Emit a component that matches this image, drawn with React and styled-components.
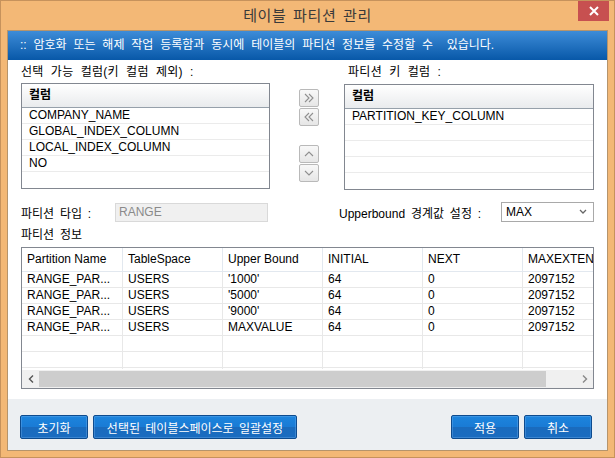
import React from "react";
import styled, { createGlobalStyle } from "styled-components";

const Global = createGlobalStyle`
  html, body { margin: 0; padding: 0; background: #ffffff; }
  body {
    font-family: "Liberation Sans", "Noto Sans CJK KR", sans-serif;
    font-size: 12px;
    color: #000;
  }
  * { box-sizing: border-box; }
`;

const Window = styled.div`
  width: 615px;
  height: 458px;
  border: 1px solid #c6925c;
  background: #f3b876;
  display: flex;
  flex-direction: column;
`;

const TitleBar = styled.div`
  height: 29px;
  display: grid;
  grid-template-columns: 1fr auto 1fr;
  align-items: start;
`;

const Title = styled.div`
  grid-column: 2;
  font-size: 15px;
  line-height: 29px;
  color: #3a3a3a;
  letter-spacing: 0.6px;
  word-spacing: 2px;
`;

const CloseButton = styled.div`
  grid-column: 3;
  justify-self: end;
  width: 31px;
  height: 20px;
  margin-right: 5px;
  background: #c75050;
  display: flex;
  align-items: center;
  justify-content: center;
`;

const Client = styled.div`
  flex: 1;
  margin: 0 6px 6px 6px;
  border: 1px solid #b5946c;
  background: #ffffff;
  display: flex;
  flex-direction: column;
`;

const Banner = styled.div`
  height: 29px;
  background: linear-gradient(#3d8cd8, #0858a8);
  color: #ffffff;
  padding-left: 12px;
  line-height: 29px;
  font-size: 12px;
  word-spacing: 3.5px;
  white-space: pre;
`;

const Body = styled.div`
  flex: 1;
  padding: 5px 13px 0 13px;
  display: flex;
  flex-direction: column;
`;

const TopSection = styled.div`
  display: flex;
`;

const ListColumn = styled.div`
  width: ${(p) => p.$w}px;
  display: flex;
  flex-direction: column;
`;

const Label = styled.div`
  height: 18px;
  line-height: 15px;
  padding-left: ${(p) => p.$indent || 0}px;
  white-space: nowrap;
  word-spacing: 3.5px;
  letter-spacing: 0.3px;
`;

const ListBox = styled.div`
  height: 106px;
  border: 1px solid #828790;
  margin-top: ${(p) => p.$offset || 0}px;
  display: flex;
  flex-direction: column;
  overflow: hidden;
`;

const ListHeader = styled.div`
  height: 24px;
  flex: none;
  background: linear-gradient(#ffffff, #e9ebed);
  border-bottom: 1px solid #96a0aa;
  font-weight: bold;
  padding-left: 7px;
  line-height: 23px;
`;

const ListRow = styled.div`
  height: 16px;
  flex: none;
  border-bottom: 1px solid ${(p) => (p.$last ? "transparent" : "#ebebeb")};
  padding-left: 7px;
  line-height: 15px;
  white-space: nowrap;
`;

const MoveColumn = styled.div`
  width: 74px;
  padding: 24px 0 0 29px;
  display: flex;
  flex-direction: column;
`;

const MoveGroup = styled.div`
  display: flex;
  flex-direction: column;
  gap: 1px;
  margin-top: ${(p) => p.$gap || 0}px;
`;

const MoveButton = styled.div`
  width: 20px;
  height: 18px;
  border: 1px solid #b9b9b9;
  border-radius: 2px;
  background: linear-gradient(#f8f8f8, #e6e6e6);
  display: flex;
  align-items: center;
  justify-content: center;
`;

const SettingsRow = styled.div`
  display: flex;
  align-items: center;
  margin-top: 12px;
  height: 20px;
`;

const FieldLabel = styled.div`
  width: ${(p) => p.$w}px;
  white-space: nowrap;
  word-spacing: 2.5px;
`;

const ReadOnlyInput = styled.div`
  width: 153px;
  height: 19px;
  background: #f0f0f0;
  border: 1px solid #d9d9d9;
  color: #8a8a8a;
  padding-left: 3px;
  line-height: 17px;
`;

const Spacer = styled.div`
  flex: 1;
`;

const Select = styled.div`
  width: 93px;
  height: 20px;
  border: 1px solid #a9a9a9;
  background: #ffffff;
  display: flex;
  align-items: center;
  justify-content: space-between;
  padding: 0 6px 0 4px;
`;

const SectionLabel = styled.div`
  margin-top: 5px;
  height: 20px;
  line-height: 16px;
  word-spacing: 2.5px;
`;

const Grid = styled.div`
  height: 142px;
  border: 1px solid #828790;
  display: flex;
  flex-direction: column;
  overflow: hidden;
`;

const GridViewport = styled.div`
  height: 122px;
  overflow: hidden;
`;

const GridRow = styled.div`
  display: flex;
  height: ${(p) => (p.$head ? 24 : 16)}px;
  border-bottom: 1px solid ${(p) => (p.$head ? "#e2e8ef" : "#e8e8e8")};
`;

const Cell = styled.div`
  flex: none;
  width: ${(p) => p.$w}px;
  padding-left: 5px;
  border-right: 1px solid ${(p) => (p.$head ? "#e2e8ef" : "#e8e8e8")};
  line-height: ${(p) => (p.$head ? 22 : 15)}px;
  white-space: nowrap;
  overflow: hidden;
`;

const ScrollBar = styled.div`
  height: 18px;
  margin-top: 1px;
  background: #f0f0f0;
  display: flex;
  align-items: stretch;
`;

const ScrollArrow = styled.div`
  width: 17px;
  flex: none;
  display: flex;
  align-items: center;
  justify-content: center;
`;

const ScrollThumb = styled.div`
  width: 507px;
  margin: 1px 0;
  background: #cdcdcd;
`;

const Footer = styled.div`
  height: 51px;
  background: #eceff2;
  display: flex;
  align-items: flex-start;
  padding: 16px 15px 0 12px;
  gap: 5px;
`;

const BlueButton = styled.div`
  width: ${(p) => p.$w}px;
  height: 24px;
  border: 1px solid #0d4b8e;
  border-radius: 2px;
  background: linear-gradient(#1c84dd 0%, #1a7bd5 50%, #1a6bbd 50%, #1a6cc0 100%);
  box-shadow: inset 0 0 0 1px rgba(120, 180, 240, 0.35);
  color: #ffffff;
  display: flex;
  align-items: center;
  justify-content: center;
  font-size: 12px;
  word-spacing: 2px;
`;

const Chevron = ({ dir, double }) => {
  const paths = {
    right: double ? ["M4 3 L8 7 L4 11", "M8 3 L12 7 L8 11"] : ["M6 3 L10 7 L6 11"],
    left: double ? ["M8 3 L4 7 L8 11", "M12 3 L8 7 L12 11"] : ["M10 3 L6 7 L10 11"],
    up: ["M3 9 L7 5 L11 9"],
    down: ["M3 5 L7 9 L11 5"],
  };
  const w = double ? 16 : 14;
  return (
    <svg width={w} height="14" viewBox={`0 0 ${w} 14`}>
      {paths[dir].map((d) => (
        <path key={d} d={d} fill="none" stroke="#8f8f8f" strokeWidth="1.1" />
      ))}
    </svg>
  );
};

const columns = [
  { key: "name", label: "Partition Name", w: 101 },
  { key: "ts", label: "TableSpace", w: 100 },
  { key: "ub", label: "Upper Bound", w: 100 },
  { key: "init", label: "INITIAL", w: 100 },
  { key: "next", label: "NEXT", w: 100 },
  { key: "max", label: "MAXEXTENTS", w: 100 },
];

const rows = [
  { name: "RANGE_PAR...", ts: "USERS", ub: "'1000'", init: "64", next: "0", max: "2097152" },
  { name: "RANGE_PAR...", ts: "USERS", ub: "'5000'", init: "64", next: "0", max: "2097152" },
  { name: "RANGE_PAR...", ts: "USERS", ub: "'9000'", init: "64", next: "0", max: "2097152" },
  { name: "RANGE_PAR...", ts: "USERS", ub: "MAXVALUE", init: "64", next: "0", max: "2097152" },
  {},
  {},
  {},
];

const leftItems = ["COMPANY_NAME", "GLOBAL_INDEX_COLUMN", "LOCAL_INDEX_COLUMN", "NO", ""];
const rightItems = ["PARTITION_KEY_COLUMN", "", "", "", ""];

export default function App() {
  return (
    <>
      <Global />
      <Window>
        <TitleBar>
          <Title>테이블 파티션 관리</Title>
          <CloseButton>
            <svg width="10" height="10" viewBox="0 0 10 10">
              <path d="M1 1 L9 9 M9 1 L1 9" stroke="#ffffff" strokeWidth="2" />
            </svg>
          </CloseButton>
        </TitleBar>
        <Client>
          <Banner>:: 암호화 또는 해제 작업 등록함과 동시에 테이블의 파티션 정보를 수정할 수  있습니다.</Banner>
          <Body>
            <TopSection>
              <ListColumn $w={249}>
                <Label>선택 가능 컬럼(키 컬럼 제외) :</Label>
                <ListBox>
                  <ListHeader>컬럼</ListHeader>
                  {leftItems.map((t, i) => (
                    <ListRow key={i} $last={i === leftItems.length - 1}>{t}</ListRow>
                  ))}
                </ListBox>
              </ListColumn>
              <MoveColumn>
                <MoveGroup>
                  <MoveButton><Chevron dir="right" double /></MoveButton>
                  <MoveButton><Chevron dir="left" double /></MoveButton>
                </MoveGroup>
                <MoveGroup $gap={19}>
                  <MoveButton><Chevron dir="up" /></MoveButton>
                  <MoveButton><Chevron dir="down" /></MoveButton>
                </MoveGroup>
              </MoveColumn>
              <ListColumn $w={250}>
                <Label $indent={4}>파티션 키 컬럼 :</Label>
                <ListBox $offset={1}>
                  <ListHeader>컬럼</ListHeader>
                  {rightItems.map((t, i) => (
                    <ListRow key={i} $last={i === rightItems.length - 1}>{t}</ListRow>
                  ))}
                </ListBox>
              </ListColumn>
            </TopSection>
            <SettingsRow>
              <FieldLabel $w={94}>파티션 타입 :</FieldLabel>
              <ReadOnlyInput>RANGE</ReadOnlyInput>
              <Spacer />
              <FieldLabel $w={162}>Upperbound 경계값 설정 :</FieldLabel>
              <Select>
                <span>MAX</span>
                <svg width="8" height="6" viewBox="0 0 8 6">
                  <path d="M1 1 L4 4 L7 1" fill="none" stroke="#666" strokeWidth="1.3" />
                </svg>
              </Select>
            </SettingsRow>
            <SectionLabel>파티션 정보</SectionLabel>
            <Grid>
              <GridViewport>
                <GridRow $head>
                  {columns.map((c) => (
                    <Cell key={c.key} $w={c.w} $head>{c.label}</Cell>
                  ))}
                </GridRow>
                {rows.map((r, i) => (
                  <GridRow key={i}>
                    {columns.map((c) => (
                      <Cell key={c.key} $w={c.w}>{r[c.key] || ""}</Cell>
                    ))}
                  </GridRow>
                ))}
              </GridViewport>
              <ScrollBar>
                <ScrollArrow>
                  <svg width="6" height="8" viewBox="0 0 6 8">
                    <path d="M5 0.5 L1.5 4 L5 7.5" fill="none" stroke="#555" strokeWidth="1.4" />
                  </svg>
                </ScrollArrow>
                <ScrollThumb />
                <Spacer />
                <ScrollArrow>
                  <svg width="6" height="8" viewBox="0 0 6 8">
                    <path d="M1 0.5 L4.5 4 L1 7.5" fill="none" stroke="#888" strokeWidth="1.4" />
                  </svg>
                </ScrollArrow>
              </ScrollBar>
            </Grid>
          </Body>
          <Footer>
            <BlueButton $w={68}>초기화</BlueButton>
            <BlueButton $w={204}>선택된 테이블스페이스로 일괄설정</BlueButton>
            <Spacer />
            <BlueButton $w={68}>적용</BlueButton>
            <BlueButton $w={68}>취소</BlueButton>
          </Footer>
        </Client>
      </Window>
    </>
  );
}
